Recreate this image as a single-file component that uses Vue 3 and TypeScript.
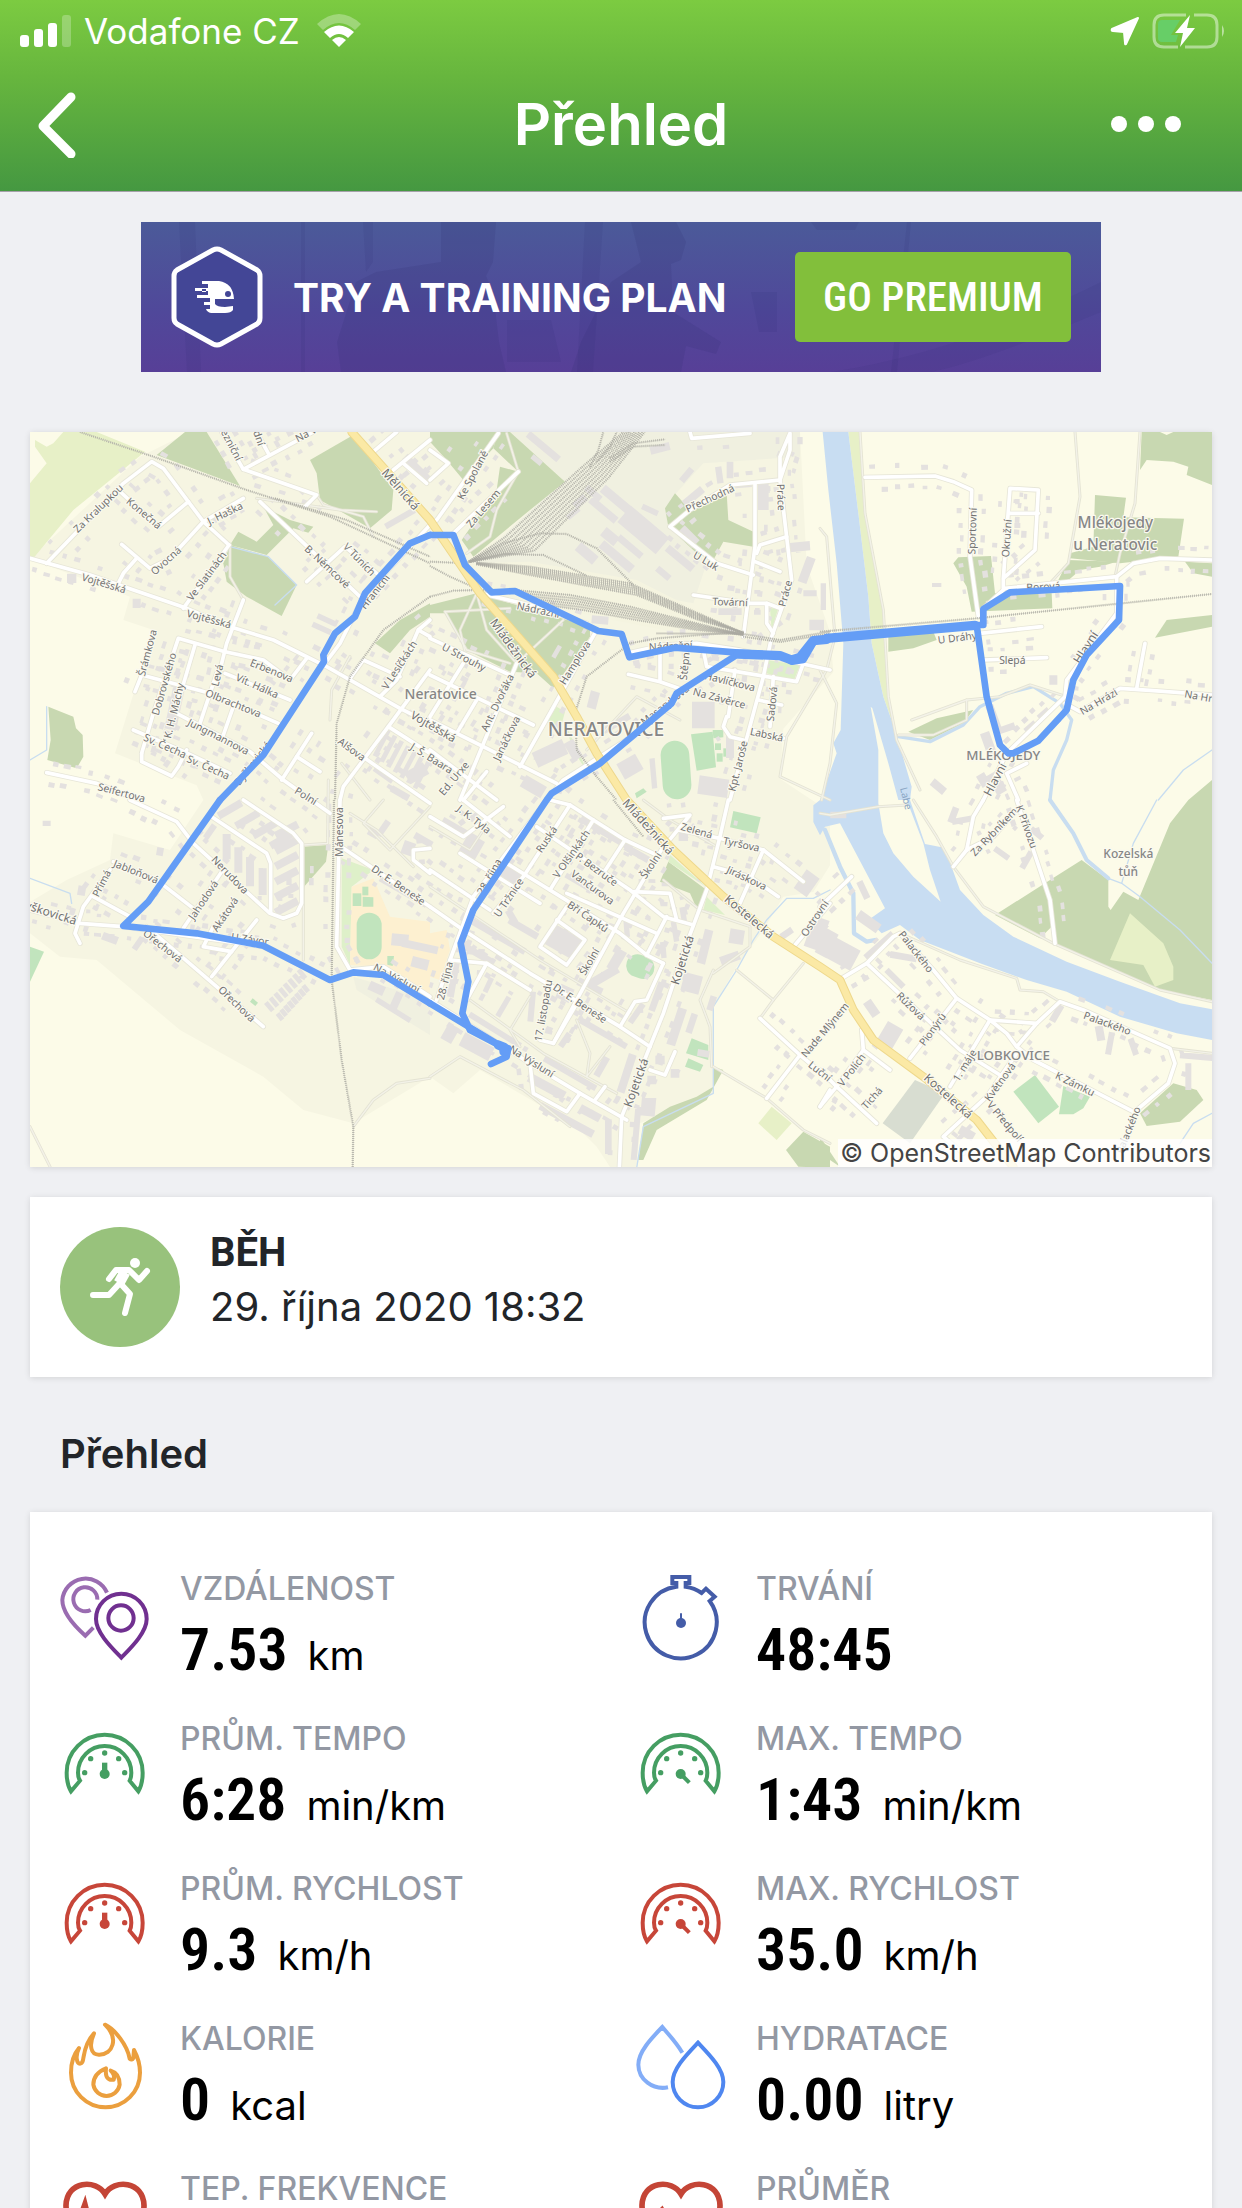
<script setup lang="ts">
type Tile = 'a' | 'b' | 'c' | 'd' | 'e' | 'f' | 'g'
type Shape = [Tile, string]

// The map is split in six sheets; every sheet keeps its own local coordinates.
const origin: Record<Tile, [number, number]> = {
  a: [0, -6], b: [1200, -6], c: [2370, -6],
  d: [0, 1104], e: [1200, 1104], f: [2370, 1104],
  g: [0, 0],
}

function place([tile, points]: Shape): string {
  const [ox, oy] = origin[tile]
  return points
    .split(' ')
    .map((pair) => {
      const [x, y] = pair.split(',').map(Number)
      return `${x + ox},${y + oy}`
    })
    .join(' ')
}

const areas: { cls: string; shapes: Shape[] }[] = [
  { cls: 'town', shapes: [['g', '0,380 330,74 480,0 2310,0 2330,400 2400,600 2410,720 2260,890 2250,1040 2400,1140 2400,1300 2350,1380 2260,1394 2200,1494 2120,1604 2050,1724 2050,1984 1830,2074 1820,2205 1740,2205 1700,2144 1640,2084 1350,1914 1270,1984 1200,1934 970,2074 820,2034 700,1934 450,1794 200,1584 90,1574 0,1504 0,1410 110,1344 240,1284 250,1204 420,1254 520,1104 500,1060 255,964 370,594 280,564 300,494']] },
  { cls: 'industry', shapes: [
    ['b', '240,6 1110,6 1110,80 820,100 720,210 720,290 830,400 790,520 130,400 400,150'],
    ['d', '970,530 1200,600 1200,705 980,570'],
  ] },
  { cls: 'yard', shapes: [['b', '110,400 300,395 620,450 900,590 940,620 700,600 500,560 200,500 100,460']] },
  { cls: 'meadow', shapes: [
    ['a', '0,160 50,100 15,50 15,30 50,50 70,40 100,6 200,6 345,65 130,240 10,385 0,385'],
    ['c', '85,6 120,6 135,250 190,540 205,800 225,900 190,800 155,640 145,500 115,250'],
    ['e', '1025,920 1085,970 1040,1020 985,970'],
  ] },
  { cls: 'forest', shapes: [
    ['a', '380,75 465,6 530,6 630,168'],
    ['a', '840,90 970,15 1090,180 1085,240 1020,295 960,260 870,210 860,130'],
    ['a', '700,230 780,270 850,290 835,308 790,295 710,375 600,345 625,305 680,335 730,285'],
    ['a', '600,345 715,380 800,465 755,558 650,500 590,455 580,400'],
    ['a', '55,830 130,860 138,895 158,915 160,980 140,1015 52,990 62,930'],
    ['a', '1035,640 1110,570 1200,520 1200,560 1140,600 1080,670'],
    ['b', '0,6 205,6 190,55 100,150 50,90 0,35'],
    ['b', '205,6 240,6 405,155 300,240 130,380 95,330 200,180 210,110 265,125 190,55'],
    ['b', '0,525 140,490 480,590 480,620 370,775 320,730 240,725 110,660 45,550 0,550'],
    ['b', '735,190 775,235 890,190 895,270 970,305 970,350 880,335 850,390 800,370 715,290 705,235'],
    ['c', '965,6 1020,6 1040,15 1060,6 1176,6 1176,165 1100,135 1105,110 1060,95 980,90 960,120'],
    ['c', '825,195 918,203 910,262 1092,266 1075,380 900,400 750,385 750,370 820,350'],
    ['c', '745,390 890,395 840,410 780,420 740,455 715,450'],
    ['c', '1095,395 1176,400 1176,440 1120,430'],
    ['c', '1040,570 1176,555 1176,590 1005,623'],
    ['c', '400,400 415,382 513,378 525,490 695,490 697,535 455,545 440,470'],
    ['c', '205,610 340,605 350,630 280,655 205,665'],
    ['c', '265,905 350,865 460,840 430,880 330,930'],
    ['f', '525,345 690,240 785,180 865,240 865,320 872,330 910,275 955,300 1050,70 1105,0 1176,-60 1176,600 1020,570 720,440 700,430 700,375 660,415'],
    ['f', '1060,850 1130,870 1150,900 1080,965 980,978 960,940'],
    ['f', '0,1010 60,1100 0,1060'],
    ['e', '1120,995 1200,1040 1200,1104 1105,1100 1068,1050'],
    ['e', '880,810 830,900 680,990 640,1080 625,1080 640,970 720,920 800,890 850,860 850,800'],
    ['e', '715,185 830,270 800,325 780,280 690,245'],
    ['d', '820,140 895,135 888,185 822,260'],
  ] },
  { cls: 'meadow', shapes: [['f', '930,340 1030,430 1060,500 1060,540 1005,560 970,495 870,480']] },
  { cls: 'garden', shapes: [
    ['d', '935,175 1030,210 965,260 960,495 935,440'],
    ['e', '830,290 885,345 820,330'],
    ['e', '720,165 830,262 715,185'],
    ['b', '1020,535 1045,535 1025,600'],
    ['b', '1010,690 1110,705 1090,755 1010,730'],
    ['b', '380,830 405,845 385,920 350,870'],
    ['b', '400,870 480,1040 430,960'],
  ] },
  { cls: 'school', shapes: [
    ['d', '965,260 1030,235 1080,350 1200,365 1200,590 1050,500 960,495'],
    ['e', '0,400 50,390 60,450 30,540 0,530'],
  ] },
  { cls: 'pitch', shapes: [
    ['d', '0,440 42,455 0,545'],
    ['d', '968,280 994,280 994,318 968,318'],
    ['d', '998,290 1030,292 1030,320 998,320'],
    ['d', '997,260 1015,260 1015,286 997,286'],
    ['d', '1072,468 1092,468 1088,498 1072,494'],
    ['d', '668,595 684,608 676,618 660,605'],
    ['b', '783,913 848,905 858,1012 800,1022'],
    ['b', '848,900 880,900 880,922 850,925'],
    ['b', '855,940 873,940 873,960 855,960'],
    ['b', '860,970 878,970 878,995 860,995'],
    ['b', '880,955 893,955 893,980 880,980'],
    ['b', '615,1090 640,1075 650,1085 620,1105'],
    ['e', '910,33 992,52 980,100 900,82'],
    ['e', '785,715 835,735 835,780 768,760'],
    ['e', '775,775 820,795 810,815 765,800'],
    ['f', '645,825 717,920 655,970 580,875'],
    ['f', '730,858 810,890 790,925 760,943 717,943'],
  ] },
  { cls: 'cemetery', shapes: [['f', '285,840 375,880 270,1030 188,970']] },
  { cls: 'water', shapes: [
    ['g', '2378,0 2395,174 2420,394 2440,634 2432,894 2410,934 2420,964 2370,1104 2350,1120 2350,1170 2370,1210 2385,1184 2430,1174 2565,1429 2515,1464 2555,1504 2610,1479 2670,1524 2850,1594 2990,1644 3110,1679 3270,1754 3440,1804 3546,1824 3546,1732 3450,1714 3270,1649 3110,1589 2950,1514 2860,1449 2790,1374 2750,1264 2735,1246 2685,1236 2640,1104 2645,1064 2595,894 2560,794 2525,634 2515,494 2485,244 2455,0'],
  ] },
  { cls: 'land', shapes: [
    ['g', '2522,824 2545,954 2545,1114 2560,1204 2590,1264 2650,1334 2732,1409 2700,1314 2680,1234 2630,1104 2605,1104 2575,994 2527,829'],
  ] },
]

const streams: { w: number; shape: Shape }[] = [
  { w: 13, shape: ['f', '15,90 60,200 100,280 102,400 140,425 165,420'] },
  { w: 10, shape: ['c', '235,920 330,935 430,885 480,830 560,790 640,770 720,820 755,870 740,930 700,1020 690,1110'] },
  { w: 12, shape: ['f', '690,0 760,100 800,180 865,235'] },
  { w: 4, shape: ['f', '865,235 905,250 960,290 1080,390 1176,490'] },
  { w: 4, shape: ['f', '905,250 940,130 1010,0'] },
  { w: 4, shape: ['c', '1015,1110 1090,1020 1176,960'] },
  { w: 4, shape: ['f', '1080,1030 1120,970 1176,940'] },
  { w: 4, shape: ['e', '1200,270 1150,295 1070,295 1010,360 970,420 920,510 850,620 850,880 640,980 620,1104'] },
  { w: 4, shape: ['a', '50,830 50,960 0,990'] },
  { w: 4, shape: ['d', '0,235 120,280 125,310'] },
  { w: 4, shape: ['a', '600,350 715,380 800,465 735,525'] },
]

const tracks: Shape[] = [
  ['c', '120,6 135,250 190,540 205,800 230,930 300,1080'],
  ['f', '280,0 350,110 400,200 490,320 700,430 1020,570 1176,605'],
  ['c', '765,6 780,200 745,400 690,460'],
  ['c', '960,6 945,220 900,370 885,440'],
  ['c', '0,720 50,820 30,1000 5,1110'],
  ['c', '0,295 20,320 45,620 20,720'],
  ['c', '235,915 340,915 440,870 440,810 275,870'],
  ['c', '440,810 540,800 630,765 740,800'],
  ['f', '0,40 30,45 175,20 260,15'],
  ['f', '240,400 420,480 590,535 600,570 670,575 720,605'],
  ['f', '1050,745 1176,760'],
  ['e', '920,510 1030,600 1120,490'],
  ['e', '1030,600 990,655'],
  ['e', '850,800 1010,895 1120,990 1200,1030'],
  ['e', '0,830 90,770 280,870 420,980'],
  ['d', '970,980 1030,900 1100,850 1200,835'],
  ['d', '0,980 60,1100'],
  ['a', '600,350 600,440 640,510'],
  ['a', '680,205 930,240 1040,245'],
  ['a', '860,195 880,225 1000,260 1030,320'],
  ['a', '900,870 905,780 960,680'],
  ['a', '935,1000 1020,1110'],
  ['b', '45,545 240,535'],
  ['b', '45,545 110,660 240,700'],
  ['b', '140,490 90,600 105,665'],
  ['b', '140,490 170,600 260,700 400,570'],
  ['b', '230,10 265,125 200,240 180,320 110,370'],
  ['b', '1190,720 1070,920 1050,1040 1200,1110'],
  ['b', '470,960 620,800 750,870'],
  ['d', '895,-60 893,130 820,135 820,480'],
  ['e', '0,260 330,480 600,640'],
  ['e', '120,600 340,760 560,880'],
  ['e', '440,660 480,760 470,830 540,740'],
  ['e', '300,590 240,690 270,740'],
  ['e', '200,30 120,150 0,80'],
  ['e', '850,510 810,600 840,680 845,800'],
  ['e', '640,0 720,60 860,140'],
  ['e', '700,240 810,330 960,380 960,440 850,520'],
  ['d', '960,40 1040,90 1150,200'],
  ['d', '1060,0 1000,70 1080,150 1200,20'],
]

const streets: Shape[] = [
  ['a', '0,385 180,435 470,535 600,590 730,630 890,710 1110,835 1200,880'],
  ['a', '50,400 280,160 365,95 400,115 520,275 597,345'],
  ['a', '640,205 520,275 420,385 360,415 275,343'],
  ['a', '320,385 280,430 265,460'],
  ['a', '597,345 460,535'],
  ['a', '265,180 385,290 475,215'],
  ['a', '575,6 640,118 860,195 825,230'],
  ['a', '640,118 850,6'],
  ['a', '680,6 715,70'],
  ['a', '640,510 590,640 560,760'],
  ['a', '335,970 370,850 445,625 585,665 700,690 780,750 830,685'],
  ['a', '495,645 440,830'],
  ['a', '315,785 335,735 540,790 745,880'],
  ['a', '560,730 510,880'],
  ['a', '610,830 580,915'],
  ['a', '585,730 780,810'],
  ['a', '310,900 450,960 600,1030'],
  ['a', '440,850 660,965 760,1050 900,1150'],
  ['a', '335,970 335,995 425,1038 445,1010 470,960'],
  ['a', '50,1028 200,1060 300,1100'],
  ['a', '690,215 990,500'],
  ['a', '830,455 945,350 1040,430'],
  ['a', '1110,740 1000,690 960,745'],
  ['a', '1200,570 1165,600 1100,750 1050,800'],
  ['a', '1165,600 1200,620'],
  ['a', '1200,720 1075,890 940,1070 930,1110'],
  ['a', '755,1050 845,910'],
  ['a', '800,980 870,1025'],
  ['a', '1075,890 1200,970'],
  ['a', '1005,985 1200,1120'],
  ['a', '1200,285 1000,500 930,640 870,720'],
  ['a', '1030,65 1100,6'],
  ['a', '1090,120 1200,30'],
  ['a', '1120,100 1190,160'],
  ['b', '0,280 20,270 205,10'],
  ['b', '70,310 265,125'],
  ['b', '0,150 55,100 0,60'],
  ['b', '720,290 860,400 970,435'],
  ['b', '720,290 780,240 900,165 1050,150'],
  ['b', '975,160 975,350 940,620'],
  ['b', '1050,150 1050,80 1080,10 1080,60 1050,150 1085,450 1025,620 1000,740 900,1110'],
  ['b', '1070,320 990,345 980,370'],
  ['b', '975,395 1050,425'],
  ['b', '790,495 960,520 1010,520 1050,535'],
  ['b', '1010,520 1010,580 1030,610'],
  ['b', '590,670 700,645 800,640 930,660 1200,720'],
  ['b', '150,490 300,525 470,580'],
  ['b', '500,600 270,1010'],
  ['b', '0,625 240,735'],
  ['b', '0,735 310,885'],
  ['b', '260,700 90,1110'],
  ['b', '100,700 0,860'],
  ['b', '140,810 80,910'],
  ['b', '0,870 380,1060'],
  ['b', '350,1110 400,1050 620,910 740,790 920,675'],
  ['b', '690,650 690,750'],
  ['b', '595,733 690,755 760,780'],
  ['b', '820,660 830,710 1100,755 1120,700'],
  ['b', '890,860 880,890 900,920 940,930'],
  ['b', '915,720 895,860'],
  ['b', '1030,740 1020,890'],
  ['b', '965,900 1060,925'],
  ['b', '985,810 1055,825'],
  ['b', '0,960 160,1080 200,1110'],
  ['b', '170,1025 100,1110'],
  ['b', '780,6 785,25 960,10'],
  ['c', '135,142 345,138 400,155 455,180 450,380 475,560'],
  ['c', '550,475 550,445 570,175 655,180 645,360 550,445'],
  ['c', '570,250 655,250'],
  ['c', '485,540 555,475 890,440 940,400 1020,385 1176,390'],
  ['c', '890,440 890,550 740,750 735,800 560,970 490,1110'],
  ['c', '480,610 665,590'],
  ['c', '490,690 680,683'],
  ['c', '735,820 780,845 900,775 1000,782 1176,795'],
  ['c', '950,775 975,640'],
  ['c', '595,1110 560,1030 620,1000'],
  ['f', '490,0 460,50 440,150 400,200'],
  ['f', '440,150 520,110 590,30'],
  ['f', '590,0 690,300 705,430'],
  ['f', '65,535 140,490 220,410 240,400 340,510 410,595 510,660 560,700 590,740 640,780 940,935'],
  ['f', '0,320 95,230'],
  ['f', '140,490 420,750 540,825'],
  ['f', '510,660 650,670'],
  ['f', '590,740 650,670 720,605 790,630 1050,745 1065,790 1045,850 950,930'],
  ['f', '410,595 270,775'],
  ['f', '510,660 390,860'],
  ['f', '590,760 500,890 370,1010 430,1060'],
  ['f', '125,690 130,750 210,810'],
  ['f', '130,750 50,860 0,920'],
  ['f', '0,810 50,860 170,970'],
  ['e', '420,15 280,230 190,340'],
  ['e', '490,60 360,270'],
  ['e', '360,0 420,15 490,60 585,120 690,170'],
  ['e', '585,120 520,220'],
  ['e', '700,140 580,340 370,730 330,720'],
  ['e', '895,0 870,110 830,270 770,430 700,640 575,950 568,1104'],
  ['e', '320,80 600,270 700,350 790,375'],
  ['e', '230,190 570,400 650,465 700,490'],
  ['e', '410,280 680,400'],
  ['e', '0,320 100,390 300,520 570,680 660,740'],
  ['e', '0,210 180,330'],
  ['e', '0,50 100,110 220,20'],
  ['e', '90,160 330,310'],
  ['e', '100,0 240,110'],
  ['e', '410,320 330,440 410,495 465,420 380,360'],
  ['e', '650,465 710,350'],
  ['e', '610,275 720,280 740,360'],
  ['e', '700,490 650,600 615,605 570,680'],
  ['e', '60,480 170,490 300,570'],
  ['e', '170,490 110,600'],
  ['e', '350,0 130,290 60,480 20,600'],
  ['e', '0,600 300,790 450,880 590,960'],
  ['e', '300,790 310,880 410,935 450,880'],
  ['e', '495,900 525,860'],
  ['e', '660,810 705,825 735,755'],
  ['e', '435,620 370,730'],
  ['e', '700,55 780,45 710,130'],
  ['e', '745,90 870,115 1000,150 1120,245'],
  ['e', '1000,150 930,310'],
  ['e', '850,200 960,230 1045,290'],
  ['e', '1095,435 1200,310'],
  ['e', '990,655 1110,765 1010,895'],
  ['e', '1110,765 1200,840'],
  ['e', '1200,870 1170,920'],
  ['d', '150,430 135,400 160,320 240,210'],
  ['d', '0,330 150,370 280,380 700,440 900,540'],
  ['d', '190,290 300,350'],
  ['d', '250,185 380,240 490,325'],
  ['d', '460,385 575,215'],
  ['d', '350,380 700,680'],
  ['d', '545,530 680,360'],
  ['d', '550,380 520,440 605,455'],
  ['d', '300,0 440,65 490,130 720,340 760,355 800,340 815,310 815,130 790,100 640,0'],
  ['d', '545,50 710,160 722,190 722,335'],
  ['d', '930,0 920,440 960,510 1060,500 1200,590'],
  ['d', '940,145 1200,320'],
  ['d', '1200,220 1150,180 1150,150 1200,145'],
]

const highway =
  '965,0 1200,264 1350,484 1570,734 1640,854 1700,964 1790,1104 1930,1254 2080,1394 2230,1514 2370,1604 2430,1644 2470,1734 2530,1824 2680,1934 2840,2064 2950,2205'

const rails: Shape[] = [
  ['a', '150,6 370,80 650,180 900,260 1200,400'],
  ['a', '735,205 950,270 1200,380'],
  ['b', '0,395 110,400 220,340 330,310 410,312 500,355 610,465'],
  ['b', '0,408 60,440 150,480'],
  ['b', '120,395 220,372 340,375 470,437'],
  ['b', '0,500 70,482 150,480 260,485'],
  ['a', '1200,500 1060,600 960,740 920,880 915,1110'],
  ['d', '912,0 905,540 935,780 970,980 968,1104'],
  ['b', '940,605 680,625 600,640 470,740 435,850 440,960 500,1040 560,1110'],
  ['b', '680,610 940,612 1050,630 1200,605'],
  ['b', '940,620 1050,636 1200,611'],
  ['c', '0,605 470,565 740,537 1176,492'],
  ['b', '480,110 505,60 520,6'],
  ['b', '500,95 540,50 560,6'],
  ['b', '540,95 610,50 705,45'],
  ['b', '540,85 610,40 705,28'],
  ['e', '550,0 640,110'],
]
for (let i = 0; i < 9; i++) {
  rails.push(['b', `${116 + i},395 ${225 + i * 11},${322 + i * 5} ${455 + i * 10},${112 + i * 4} ${580 + i * 8},6`])
}
for (let i = 0; i < 6; i++) {
  rails.push(['b', `140,${398 + i} 300,${410 + i * 5} ${600 + i * 4},${460 + i * 7} 800,${548 + i * 4} 940,609`])
  rails.push(['b', `${250 + i * 20},${480 + i * 9} ${420 + i * 8},${495 + i * 9} ${600 + i * 4},${530 + i * 8} 800,${580 + i * 4} 940,614`])
}

const routes: Shape[] = [
  ['a', '1200,315 1140,340 1005,490 975,560 915,610 880,675 882,695 700,975 570,1110'],
  ['d', '570,0 355,305 280,378 500,400 700,437 900,540 970,517 1060,525 1200,610'],
  ['e', '0,610 215,740 235,745 230,770 183,792'],
  ['b', '0,315 70,315 105,405 185,487 255,483 505,603 575,612 598,682 735,653 925,668 1050,675 1085,695 1120,690 1155,630 1200,625'],
  ['b', '920,675 740,790 725,820 510,1000 365,1090 350,1110 130,1440 92,1540 115,1655 97,1750 120,1800 215,1850'],
  ['c', '-20,630 470,585 490,585 490,537 570,487 900,468 897,570 800,675 760,750 740,840 655,932 580,970 565,970 540,945 500,800 470,585'],
]
const doubled: Shape[] = [
  ['b', '925,672 1050,677 1085,690 1110,682 1150,632 1190,628'],
  ['c', '20,625 465,586'],
  ['e', '205,735 222,742 222,755'],
]

// Small houses are lined up on both sides of every street.
let seed = 7
function rnd(): number {
  seed = (seed * 16807) % 2147483647
  return seed / 2147483647
}
function house(x: number, y: number, ux: number, uy: number, l: number, w: number): string {
  const ax = ux * l, ay = uy * l, bx = -uy * w, by = ux * w
  const p = [[-ax - bx, -ay - by], [ax - bx, ay - by], [ax + bx, ay + by], [-ax + bx, -ay + by]]
  return 'M' + p.map(([dx, dy]) => `${(x + dx).toFixed(0)} ${(y + dy).toFixed(0)}`).join('L') + 'Z'
}
let houses = ''
for (const street of streets) {
  const pts = place(street).split(' ').map((s) => s.split(',').map(Number))
  for (let i = 1; i < pts.length; i++) {
    const dx = pts[i][0] - pts[i - 1][0]
    const dy = pts[i][1] - pts[i - 1][1]
    const len = Math.hypot(dx, dy)
    const ux = dx / len, uy = dy / len
    for (let t = 22; t < len - 12; t += 32 + rnd() * 14) {
      for (const side of [-1, 1]) {
        if (rnd() < 0.28) continue
        const off = side * (26 + rnd() * 12)
        houses += house(pts[i - 1][0] + ux * t - uy * off, pts[i - 1][1] + uy * t + ux * off, ux, uy, 6 + rnd() * 5, 5 + rnd() * 3)
      }
    }
  }
}

// Blocks of flats, halls and garages: sheet, centre, half length, half width, angle.
const blocks: [Tile, number, number, number, number, number][] = [
  ['b', 640, 300, 75, 32, 40], ['b', 560, 210, 55, 14, 40], ['b', 520, 240, 50, 12, 40], ['b', 490, 190, 28, 10, 40],
  ['b', 560, 380, 60, 14, 40], ['b', 600, 350, 45, 10, 40], ['b', 470, 370, 34, 16, 40], ['b', 540, 320, 26, 16, 40],
  ['b', 450, 215, 22, 12, -40], ['b', 430, 250, 22, 8, -40], ['b', 750, 385, 50, 12, 40], ['b', 700, 430, 24, 10, 40],
  ['b', 660, 240, 26, 9, 25], ['b', 770, 135, 24, 10, -50], ['b', 690, 55, 30, 12, -15], ['b', 790, 200, 36, 12, -40],
  ['b', 340, 50, 60, 11, 40], ['b', 320, 90, 18, 8, 40], ['b', 775, 320, 32, 16, 45], ['b', 900, 120, 10, 25, 0],
  ['b', 868, 135, 10, 25, -8], ['b', 1000, 200, 16, 40, 0], ['b', 940, 165, 25, 8, -5], ['b', 1110, 350, 30, 14, -5],
  ['b', 1130, 420, 14, 40, 20], ['b', 1160, 585, 22, 16, 0], ['b', 900, 545, 35, 10, 0], ['b', 820, 855, 34, 40, 0],
  ['b', 360, 970, 50, 24, -25], ['b', 430, 960, 30, 16, 60], ['b', 600, 1010, 32, 26, -30], ['b', 670, 1030, 8, 45, -5],
  ['b', 850, 1070, 45, 28, 8], ['b', 560, 880, 45, 10, -30], ['b', 310, 1070, 36, 20, 30], ['b', 490, 810, 14, 26, 15],
  ['b', 510, 570, 25, 12, 5], ['b', 380, 665, 7, 20, 30], ['b', 900, 950, 12, 34, 0], ['b', 1140, 490, 20, 9, 0],
  ['a', 1110, 265, 50, 9, -30], ['a', 1160, 115, 50, 12, 45], ['a', 890, 570, 30, 8, 25], ['a', 875, 595, 30, 8, 25],
  ['a', 320, 520, 12, 14, 0], ['a', 125, 445, 14, 14, 0], ['a', 1060, 1035, 34, 8, 35], ['a', 1160, 1030, 32, 20, -30],
  ['a', 1110, 1090, 30, 10, 30], ['a', 435, 830, 18, 70, 12],
  ['d', 1060, 85, 10, 26, 35], ['d', 1030, 100, 16, 12, 30], ['d', 1135, 145, 18, 20, 20], ['d', 1120, 275, 80, 9, 30],
  ['d', 1180, 120, 30, 10, 30], ['d', 1110, 420, 26, 18, 5], ['d', 1170, 440, 55, 12, 12], ['d', 1170, 490, 26, 16, 15],
  ['d', 1040, 565, 24, 14, 25], ['d', 1100, 600, 12, 24, 25], ['d', 1090, 630, 60, 8, 32], ['d', 325, 430, 9, 22, 35],
  ['d', 240, 415, 24, 12, 20], ['d', 390, 155, 10, 12, 10], ['d', 155, 272, 12, 14, 10], ['d', 50, 70, 12, 8, 0],
  ['d', 590, 140, 12, 38, 0], ['d', 625, 180, 12, 38, 0], ['d', 660, 215, 12, 44, 0], ['d', 698, 245, 12, 40, 0],
  ['d', 540, 95, 9, 24, 35],
  ['e', 125, 140, 28, 32, 30], ['e', 90, 90, 60, 10, 30], ['e', 250, 225, 34, 22, 35], ['e', 190, 400, 110, 10, 30],
  ['e', 140, 460, 60, 10, 30], ['e', 245, 350, 22, 10, 60], ['e', 280, 385, 50, 10, 30], ['e', 400, 425, 46, 34, 30],
  ['e', 530, 100, 90, 11, 30], ['e', 620, 160, 40, 10, 30], ['e', 450, 250, 50, 8, 30], ['e', 560, 480, 16, 34, 30],
  ['e', 520, 530, 50, 14, -30], ['e', 480, 560, 40, 12, 25], ['e', 590, 385, 8, 26, -5], ['e', 735, 395, 8, 30, -10],
  ['e', 760, 345, 8, 24, -10], ['e', 700, 450, 8, 24, -5], ['e', 825, 440, 13, 52, 14], ['e', 920, 410, 22, 22, 10],
  ['e', 900, 475, 30, 14, -20], ['e', 785, 550, 28, 28, 15], ['e', 680, 590, 10, 45, 20], ['e', 740, 680, 14, 58, 18],
  ['e', 785, 670, 10, 30, 18], ['e', 845, 610, 10, 22, 18], ['e', 620, 640, 9, 34, 35], ['e', 590, 820, 12, 60, 18],
  ['e', 520, 700, 80, 9, 30], ['e', 420, 820, 90, 9, 30], ['e', 220, 620, 8, 34, 30], ['e', 175, 555, 8, 24, 25],
  ['e', 195, 690, 90, 9, 32], ['e', 305, 620, 9, 45, 5], ['e', 140, 740, 50, 22, 28], ['e', 60, 700, 18, 26, 30],
  ['e', 350, 860, 60, 14, 28], ['e', 410, 960, 90, 12, 28], ['e', 480, 940, 34, 12, 28], ['e', 535, 1010, 10, 52, 0],
  ['e', 618, 1000, 9, 80, 5], ['e', 655, 920, 22, 28, 5], ['e', 515, 800, 10, 32, 30], ['e', 405, 720, 9, 24, 35],
  ['e', 70, 540, 10, 52, 10], ['e', 1160, 400, 24, 48, 20], ['e', 1130, 250, 24, 34, 35], ['e', 690, 780, 14, 13, 0],
  ['e', 735, 820, 13, 13, 0], ['e', 665, 840, 13, 13, 0], ['e', 760, 110, 14, 13, 0], ['e', 1070, 400, 20, 10, -35],
  ['e', 820, 760, 18, 10, 10], ['e', 405, 580, 22, 22, 25],
  ['f', 65, 460, 46, 34, 28], ['f', 20, 430, 20, 40, 28], ['f', 145, 365, 38, 16, 35], ['f', 180, 440, 55, 14, -42],
  ['f', 55, 45, 24, 10, 0], ['f', 130, 270, 10, 28, -25], ['f', 155, 625, 14, 26, -35], ['f', 210, 705, 26, 34, 30],
  ['f', 250, 470, 40, 10, 10], ['f', 225, 535, 36, 9, 45], ['f', 430, 60, 34, 9, -10], ['f', 400, 45, 10, 24, 20],
  ['f', 620, 180, 9, 28, 30], ['f', 545, 160, 26, 9, 35], ['f', 650, 100, 22, 9, 40], ['f', 840, 700, 12, 22, -10],
  ['f', 870, 730, 9, 34, 10], ['f', 710, 640, 10, 28, 30], ['f', 1105, 830, 9, 40, 0], ['f', 1130, 770, 50, 9, 5],
  ['f', 940, 740, 9, 26, -20], ['f', 440, 1000, 24, 14, 30],
  ['c', 520, 860, 12, 36, -20], ['c', 560, 895, 26, 10, -20], ['c', 700, 750, 12, 14, 0], ['c', 505, 940, 14, 34, -20],
  ['c', 670, 850, 20, 8, -40], ['c', 630, 890, 20, 8, -40], ['c', 530, 1060, 16, 34, -30], ['c', 490, 1050, 14, 20, -30],
  ['c', 355, 1070, 24, 12, 40], ['c', 350, 465, 14, 6, 0], ['c', 10, 500, 8, 40, 0],
]
for (let i = 0; i < 6; i++) blocks.push(['d', 770, 90 + i * 46, 38, 12, -28])
for (let i = 0; i < 4; i++) blocks.push(['d', 600 + i * 52, 28 + i * 30, 40, 11, -30])
for (let i = 0; i < 7; i++) blocks.push(['a', 1055 + i * 20, 940 + i * 16, 7, 44, 28])
for (let i = 0; i < 8; i++) {
  blocks.push(['d', 718 + i * 14, 620 - i * 14, 7, 16, -40])
  blocks.push(['d', 750 + i * 11, 650 - i * 12, 7, 12, -40])
}
let big = ''
for (const [tile, x, y, l, w, deg] of blocks) {
  const r = (deg * Math.PI) / 180
  big += house(x + origin[tile][0], y + origin[tile][1], Math.cos(r), Math.sin(r), l, w)
}

const labels: [Tile, string, number, number, number, number?][] = [
  ['a', 'Za Kralupkou', 205, 235, -44], ['a', 'Konečná', 342, 250, 40], ['a', 'J. Haška', 585, 250, -26],
  ['a', 'Ovocná', 408, 392, -42], ['a', 'Ve Slatinách', 530, 438, -53], ['a', 'Vojtěšská', 222, 460, 17],
  ['a', 'Vojtěšská', 537, 567, 15], ['a', 'ezniční', 605, 45, 62], ['a', 'dní', 687, 24, 70], ['a', 'Na V', 828, 12, -28],
  ['a', 'Mělnická', 1112, 178, 49, 36], ['a', 'V Túních', 988, 388, 46], ['a', 'B. Němcové', 892, 410, 43],
  ['a', 'Hraniční', 1035, 485, -52], ['a', 'Šrámkova', 352, 668, -75], ['a', 'Dobrovského', 402, 762, -74],
  ['a', 'Levá', 562, 736, -76], ['a', 'Erbenova', 725, 722, 22], ['a', 'Vít. Hálka', 682, 768, 24],
  ['a', 'Olbrachtova', 610, 820, 22], ['a', 'K. H. Máchy', 432, 842, -76], ['a', 'Jungmannova', 565, 920, 27],
  ['a', 'Sv. Čecha', 405, 948, 24], ['a', 'Sv. Čecha', 535, 1012, 24], ['a', 'V Lesíčkách', 1108, 705, -57],
  ['a', 'Alšova', 965, 958, 36], ['a', 'Seifertova', 275, 1088, 15], ['a', 'Polní', 828, 1098, 32],
  ['a', 'Byškovická', 668, 1000, -52],
  ['b', 'Ke Spolaně', 128, 135, -62], ['b', 'Za Lesem', 160, 235, -50], ['b', 'Přechodná', 840, 205, -25],
  ['b', 'Práce', 1053, 202, 88], ['b', 'Práce', 1066, 490, -75], ['b', 'U Luk', 828, 393, 30], ['b', 'Tovární', 900, 516, 2],
  ['b', 'Nádražní', 325, 540, 12], ['b', 'Mládežnická', 250, 655, 54, 36], ['b', 'U Strouhy', 102, 682, 28],
  ['b', 'Hamplova', 435, 698, -58], ['b', 'Nádražní', 722, 648, -3], ['b', 'Štěpná', 765, 700, -84],
  ['b', 'Havlíčkova', 900, 755, 14], ['b', 'Na Závěrce', 868, 805, 15], ['b', 'Sadová', 1026, 822, -84],
  ['b', 'Labská', 1010, 914, 12], ['b', 'Kpt. Jaroše', 924, 1008, -76], ['b', 'Ant. Dvořáka', 202, 818, -64],
  ['b', 'Janáčkova', 230, 925, -64], ['b', 'Vojtěšská', 10, 890, 30, 34], ['b', 'J. Š. Baara', 5, 985, 32],
  ['b', 'Ed. Urxe', 72, 1045, -50], ['b', 'Masarykova', 705, 825, -38],
  ['c', 'Sportovní', 457, 303, -88], ['c', 'Okružní', 560, 325, -86], ['c', 'Borová', 670, 470, -3],
  ['c', 'U Dráhy', 412, 623, -7], ['c', 'Slepá', 577, 690, 0], ['c', 'Hlavní', 797, 652, -58, 36],
  ['c', 'Na Hrázi', 836, 815, -30], ['c', 'Na Hrázi', 1155, 802, 10], ['c', 'Hlavní', 525, 1048, -62, 36],
  ['d', 'Jabloňová', 318, 215, 22], ['d', 'Přímá', 215, 250, -63], ['d', 'Byškovická', 52, 335, 18, 36],
  ['d', 'Nerudova', 600, 225, 46], ['d', 'Jahodová', 520, 300, -56], ['d', 'Akátová', 585, 343, -56],
  ['d', 'Ořechová', 398, 438, 38], ['d', 'Ořechová', 620, 612, 44], ['d', 'U Závor', 660, 418, 8],
  ['d', 'Mánesova', 928, 96, -90], ['d', 'Dr. E. Beneše', 1105, 255, 34], ['d', 'Na Výsluní', 1100, 535, 28],
  ['e', 'J. K. Tyla', 132, 58, 38], ['e', 'Ruská', 350, 118, -56], ['e', 'V Olšinkách', 424, 162, -55],
  ['e', 'P. Bezruče', 500, 208, 36], ['e', 'Vančurova', 488, 262, 36], ['e', 'Školní', 663, 196, -56],
  ['e', 'Bří Čapků', 474, 350, 34], ['e', 'U Tržnice', 236, 293, -56], ['e', '28. října', 178, 230, -60],
  ['e', '28. října', 45, 542, -76], ['e', 'Mládežnická', 655, 80, 48, 36], ['e', 'Zelená', 800, 92, 16],
  ['e', 'Tyršova', 934, 133, 12], ['e', 'Jiráskova', 950, 234, 25], ['e', 'Kostelecká', 958, 350, 40, 36],
  ['e', 'Ostrovní', 1154, 355, -56], ['e', 'Školní', 478, 485, -60], ['e', 'Kojetická', 757, 480, -72, 36],
  ['e', 'Kojetická', 618, 848, -70, 36], ['e', 'Dr. E. Beneše', 450, 610, 34], ['e', '17. listopadu', 340, 632, -80],
  ['e', 'Na Výsluní', 305, 784, 32], ['e', 'Nade Mlýnem', 1185, 690, -50], ['e', 'Luční', 1170, 814, 38],
  ['f', 'Za Rybníkem', 522, 95, -46], ['f', 'K Přívozu', 620, 80, 70], ['f', 'Palackého', 288, 455, 52],
  ['f', 'Palackého', 862, 670, 20], ['f', 'Růžová', 272, 618, 44], ['f', 'Pionýrů', 338, 688, -54],
  ['f', 'V Polích', 95, 810, -52], ['f', 'Tichá', 156, 894, -48], ['f', '1. máje', 434, 796, -58],
  ['f', 'Kostelecká', 385, 888, 42, 36], ['f', 'Květnová', 540, 846, -54], ['f', 'V Předpolí', 555, 965, 50],
  ['f', 'K Zámku', 765, 852, 26], ['f', 'Palackého', 925, 990, -68],
]

const places: [Tile, string, number, number, number, number][] = [
  ['a', 'Neratovice', 1232, 792, 42, 500], ['b', 'NERATOVICE', 528, 896, 58, 500],
  ['c', 'Mlékojedy', 886, 278, 46, 500], ['c', 'u Neratovic', 886, 342, 46, 500],
  ['c', 'MLÉKOJEDY', 550, 976, 40, 500], ['f', 'LOBKOVICE', 580, 766, 40, 500],
  ['f', 'Kozelská', 925, 162, 36, 500], ['f', 'tůň', 925, 214, 36, 500],
]

interface Stat { icon: string; label: string; value?: string; unit?: string }
const stats: Stat[] = [
  { icon: 'pins', label: 'VZDÁLENOST', value: '7.53', unit: 'km' },
  { icon: 'watch', label: 'TRVÁNÍ', value: '48:45' },
  { icon: 'gauge green avg', label: 'PRŮM. TEMPO', value: '6:28', unit: 'min/km' },
  { icon: 'gauge green max', label: 'MAX. TEMPO', value: '1:43', unit: 'min/km' },
  { icon: 'gauge red avg', label: 'PRŮM. RYCHLOST', value: '9.3', unit: 'km/h' },
  { icon: 'gauge red max', label: 'MAX. RYCHLOST', value: '35.0', unit: 'km/h' },
  { icon: 'flame', label: 'KALORIE', value: '0', unit: 'kcal' },
  { icon: 'drops', label: 'HYDRATACE', value: '0.00', unit: 'litry' },
  { icon: 'heart', label: 'TEP. FREKVENCE' },
  { icon: 'heart low', label: 'PRŮMĚR' },
]
</script>

<template>
  <div class="app">
    <header class="top">
      <div class="status">
        <svg class="signal" width="52" height="32" viewBox="0 0 52 32" fill="#fff">
          <rect x="0" y="20" width="9" height="12" rx="3" />
          <rect x="14" y="14" width="9" height="18" rx="3" />
          <rect x="28" y="8" width="9" height="24" rx="3" />
          <rect x="42" y="0" width="9" height="32" rx="3" opacity=".25" />
        </svg>
        <span class="carrier">Vodafone CZ</span>
        <svg width="46" height="34" viewBox="0 0 46 34" fill="#fff">
          <path opacity=".3" d="M1 10Q23 -10 45 10L39 16Q23 2 7 16Z" />
          <path d="M8 18Q23 5 38 18L32 24Q23 16 14 24Z" />
          <path d="M16 26Q23 20 30 26L23 33Z" />
        </svg>
        <span class="grow"></span>
        <svg width="30" height="30" viewBox="0 0 30 30" fill="#fff"><path d="M28 2L16 28Q15 29 15 27L14 16L3 15Q1 15 2 13Z" stroke="#fff" stroke-width="2" stroke-linejoin="round" /></svg>
        <svg class="battery" width="75" height="36" viewBox="0 0 75 36" fill="none">
          <path d="M34 2H12Q2 2 2 12V24Q2 34 12 34H26M42 2H55Q65 2 65 12V24Q65 34 55 34H33" stroke="#fff" stroke-opacity=".45" stroke-width="3" />
          <path d="M70 12Q74 18 70 24Z" fill="#fff" fill-opacity=".5" />
          <path d="M10 7H28L19 22H26L24 29H10Q6 29 6 25V11Q6 7 10 7Z" fill="#67ce67" />
          <path d="M38 2L23 20H31L28 34L43 15H35Z" fill="#fff" />
        </svg>
      </div>
      <nav class="nav">
        <button class="icon-btn" aria-label="Zpět">
          <svg width="40" height="68" viewBox="0 0 40 68" fill="none" stroke="#fff" stroke-width="9" stroke-linecap="round" stroke-linejoin="round"><path d="M34 7L6 36L34 64" /></svg>
        </button>
        <h1>Přehled</h1>
        <button class="icon-btn more" aria-label="Více">
          <svg width="72" height="18" viewBox="0 0 72 18" fill="#fff"><circle cx="9" cy="9" r="8" /><circle cx="36" cy="9" r="8" /><circle cx="63" cy="9" r="8" /></svg>
        </button>
      </nav>
    </header>

    <main>
      <section class="banner">
        <svg class="photo" viewBox="0 0 960 150" preserveAspectRatio="xMidYMid slice" fill="#2c2c6c">
          <path opacity=".1" d="M38 0H54L60 150H46ZM160 0H164V150H160ZM444 0H462L452 150H436ZM766 0H770L756 150H750Z" />
          <path opacity=".14" d="M300 0H355L352 40L345 54L352 70L358 120L365 150H200L196 120L215 60L235 50L300 40Z" />
          <path opacity=".14" d="M490 0H535L545 20L540 38L530 42L532 90L580 120L575 132L545 124L540 150H430L440 120L470 60L500 40Z" />
          <path opacity=".1" d="M222 0H232V40L225 50ZM366 98H410L420 140H366ZM610 70H636V110H618ZM670 0H718L714 8H676Z" />
          <path opacity=".08" d="M690 150Q820 130 960 60V90Q840 140 790 150Z" />
        </svg>
        <svg class="badge" width="92" height="102" viewBox="0 0 92 102">
          <path d="M42 4Q46 2 50 4L86 24Q89 26 89 30V72Q89 76 86 78L50 98Q46 100 42 98L6 78Q3 76 3 72V30Q3 26 6 24Z" fill="#434696" stroke="#fff" stroke-width="5" />
          <path fill="#fff" d="M31 35H48Q62 37 63 53H44V58Q46 61 54 61L62 60V64Q60 67 54 67H40Q36 66 35 63H39V59H33V56H39V52H26V49H37V45H24V42H37V38H31ZM31 43V46H35V43Z" />
          <ellipse cx="57" cy="48" rx="3" ry="3" fill="#434696" />
        </svg>
        <strong>TRY A TRAINING PLAN</strong>
        <button class="premium">GO PREMIUM</button>
      </section>

      <section class="map">
        <svg viewBox="0 0 3546 2205">
          <rect width="3546" height="2205" fill="#fcfbe8" />
          <g v-for="(layer, i) in areas" :key="'a' + i" :class="layer.cls">
            <polygon v-for="(s, j) in layer.shapes" :key="j" :points="place(s)" />
          </g>
          <g class="pitch">
            <rect x="980" y="1442" width="75" height="140" rx="37" />
            <rect x="1895" y="926" width="86" height="176" rx="43" transform="rotate(-4 1938 1014)" />
            <rect x="1788" y="1570" width="86" height="68" rx="34" transform="rotate(20 1831 1604)" />
          </g>
          <g fill="none" stroke="#c8ddf0" stroke-linecap="round" stroke-linejoin="round">
            <polyline v-for="(s, i) in streams" :key="i" :points="place(s.shape)" :stroke-width="s.w" />
          </g>
          <path :d="houses + big" fill="#e4e1df" />
          <g class="line" stroke="#e4e3d3" stroke-width="9"><polyline v-for="(s, i) in tracks" :key="i" :points="place(s)" /></g>
          <g class="line" stroke="#f3f2e8" stroke-width="4"><polyline v-for="(s, i) in tracks" :key="i" :points="place(s)" /></g>
          <g class="line" stroke="#e7e6d8" stroke-width="16"><polyline v-for="(s, i) in streets" :key="i" :points="place(s)" /></g>
          <g class="line" stroke="#fff" stroke-width="11"><polyline v-for="(s, i) in streets" :key="i" :points="place(s)" /></g>
          <g class="line" stroke="#cfcec3" stroke-width="2"><polyline v-for="(s, i) in rails" :key="i" :points="place(s)" /></g>
          <g fill="none" stroke="#a9a8a0" stroke-width="7" stroke-dasharray="2 4"><polyline v-for="(s, i) in rails" :key="i" :points="place(s)" /></g>
          <polyline class="line" :points="highway" stroke="#eed88c" stroke-width="26" />
          <polyline class="line" :points="highway" stroke="#fbe9a5" stroke-width="20" />
          <g class="names">
            <text
              v-for="([t, name, x, y, deg, size], i) in labels"
              :key="i"
              :font-size="size ?? 31"
              dy=".35em"
              :transform="`translate(${x + origin[t][0]} ${y + origin[t][1]}) rotate(${deg})`"
            >{{ name }}</text>
            <text x="2618" y="1102" font-size="30" class="river" transform="rotate(76 2618 1102)">Labe</text>
          </g>
          <g class="names places">
            <text
              v-for="([t, name, x, y, size, weight], i) in places"
              :key="i"
              :x="x + origin[t][0]"
              :y="y + origin[t][1]"
              dy=".36em"
              :font-size="size"
              :font-weight="weight"
            >{{ name }}</text>
          </g>
          <g class="line" stroke="#649df6" stroke-width="20"><polyline v-for="(s, i) in routes" :key="i" :points="place(s)" /></g>
          <g class="line" stroke="#649df6" stroke-width="28"><polyline v-for="(s, i) in doubled" :key="i" :points="place(s)" /></g>
        </svg>
        <small>© OpenStreetMap Contributors</small>
      </section>

      <section class="card activity">
        <svg width="120" height="120" viewBox="0 0 120 120">
          <circle cx="60" cy="60" r="60" fill="#98c27c" />
          <g fill="none" stroke="#fff" stroke-width="6" stroke-linecap="round" stroke-linejoin="round">
            <path d="M49 52L56 43H69L79 53L87 44" />
            <path d="M33 68H49L60 56L70 67L65 86" />
            <path d="M65 45L59 56" stroke-width="11" stroke-linecap="butt" />
          </g>
          <circle cx="75" cy="36" r="5" fill="#fff" />
        </svg>
        <div>
          <h2>BĚH</h2>
          <time datetime="2020-10-29T18:32">29. října 2020 18:32</time>
        </div>
      </section>

      <h2 class="section">Přehled</h2>

      <section class="card stats">
        <div v-for="s in stats" :key="s.label" class="stat">
          <svg width="90" height="90" viewBox="0 0 270 270" fill="none" stroke-width="12" :class="s.icon">
            <template v-if="s.icon === 'pins'">
              <g stroke="#9a6cb1">
                <path d="M141 62A70 70 0 0 0 7 84C7 122 48 166 76 191L100 167" />
                <path d="M112 83A36 36 0 1 0 92 114" />
              </g>
              <g stroke="#703090">
                <path d="M184 257C156 228 108 182 108 141A76 76 0 0 1 260 141C260 182 212 228 184 257Z" />
                <circle cx="183" cy="138" r="38" />
              </g>
            </template>
            <g v-else-if="s.icon === 'watch'" stroke="#445ca8">
              <path d="M149 44A109 109 0 0 1 197 63L210 50L236 74L221 87A108 108 0 1 1 121 44V33H109V15H160V33H149Z" />
              <path d="M135 124V150" stroke-width="6" />
              <circle cx="135" cy="153" r="15" fill="#445ca8" stroke="none" />
            </g>
            <template v-else-if="s.icon.startsWith('gauge')">
              <path d="M33 208C22 190 20 170 20 152A114 114 0 0 1 248 152C248 170 246 190 235 208L209 176C213 168 214 160 214 152A80 80 0 0 0 54 152C54 160 55 168 60 176Z" />
              <g class="fill" stroke="none">
                <circle cx="134" cy="93" r="8" /><circle cx="92" cy="110" r="8" /><circle cx="176" cy="110" r="8" />
                <circle cx="74" cy="152" r="8" /><circle cx="194" cy="152" r="8" /><circle cx="134" cy="156" r="15" />
              </g>
              <path v-if="s.icon.endsWith('avg')" d="M134 122V156" stroke-width="16" />
              <path v-else d="M134 156L160 182" stroke-width="12" />
            </template>
            <g v-else-if="s.icon === 'flame'" stroke="#eb9f3e" stroke-linejoin="round">
              <path d="M135 8C165 22 202 70 209 110Q216 116 220 108L222 84C236 110 240 130 240 152A103 103 0 0 1 33 152C33 124 38 100 57 78C45 102 50 125 60 125C78 125 60 80 102 34C86 70 92 99 118 98C158 97 178 50 135 8Z" />
              <path d="M138 139C110 150 100 170 100 188A40 40 0 0 0 179 188C179 168 172 152 152 146Q166 160 161 173Q134 178 138 139Z" />
            </g>
            <template v-else-if="s.icon === 'drops'">
              <path stroke="#83adf7" d="M139 92C120 60 98 38 79 15C45 50 7 90 7 128A74 70 0 0 0 96 196" />
              <path stroke="#4f87f0" d="M186 62C150 100 110 140 110 180A76 76 0 0 0 262 180C262 140 222 100 186 62Z" />
            </template>
            <g v-else stroke="#c44536" stroke-width="17">
              <path d="M135 66C108 20 20 26 18 100C18 170 90 220 135 250C180 220 252 170 252 100C250 26 162 20 135 66Z" />
              <path v-if="s.icon === 'heart'" d="M20 140H58L75 92L100 190" stroke-width="14" />
              <path v-else d="M40 150L78 112L110 170" stroke-width="14" />
            </g>
          </svg>
          <div>
            <h3>{{ s.label }}</h3>
            <p v-if="s.value"><b>{{ s.value }}</b><span v-if="s.unit">{{ s.unit }}</span></p>
          </div>
        </div>
      </section>
    </main>
  </div>
</template>

<style>
body {
  margin: 0;
  background: #eff0f3;
}
</style>

<style scoped>
.app {
  height: 100vh;
  overflow: hidden;
  background: #eff0f3;
  color: #222529;
  font-family: Inter, Roboto, "Liberation Sans", sans-serif;
}
h1, h2, h3, p {
  margin: 0;
}
svg {
  flex: none;
}
.top {
  background: linear-gradient(#7ccb41, #67b63e 40%, #459841);
  border-bottom: 1px solid #a5a1a9;
  color: #fff;
  padding-bottom: 5px;
}
.status {
  display: flex;
  align-items: center;
  height: 62px;
  padding: 0 15px 0 20px;
  gap: 12px;
  font-size: 35px;
}
.carrier {
  margin-right: 4px;
}
.grow {
  flex: 1;
}
.nav {
  display: flex;
  align-items: center;
  justify-content: space-between;
  height: 124px;
  padding: 0 60px 0 37px;
}
.nav h1 {
  font-size: 58px;
  font-weight: 600;
}
.icon-btn {
  display: flex;
  width: 72px;
  padding: 0;
  border: 0;
  background: none;
}
.more {
  margin-left: -23px;
}
main {
  padding: 30px;
}
.banner {
  position: relative;
  display: flex;
  align-items: center;
  max-width: 960px;
  height: 150px;
  margin: 0 auto 60px;
  padding: 0 30px;
  box-sizing: border-box;
  overflow: hidden;
  background: linear-gradient(#4b5a99, #50489a 60%, #573f97);
  color: #fff;
}
.photo {
  position: absolute;
  inset: 0;
  width: 100%;
  height: 100%;
}
.badge, .banner strong, .premium {
  position: relative;
}
.banner strong {
  flex: 1;
  margin-left: 30px;
  font-size: 39px;
  font-weight: 700;
}
.premium {
  width: 276px;
  height: 90px;
  padding: 0;
  border: 0;
  border-radius: 5px;
  background: #82bf3b;
  color: #fff;
  font: 500 41px "Roboto Condensed", "Liberation Sans Narrow", Roboto, sans-serif;
}
.map, .card {
  background: #fff;
  box-shadow: 0 1px 6px rgba(0, 0, 0, 0.12);
}
.map {
  position: relative;
  margin-bottom: 30px;
}
.map svg {
  display: block;
  width: 100%;
}
.map small {
  position: absolute;
  right: 0;
  bottom: 0;
  padding: 0 1px 0 2px;
  background: rgba(255, 255, 255, 0.8);
  color: #444;
  font-size: 25px;
  line-height: 28px;
}
.town { fill: #f6f5e2; }
.industry { fill: #f0f0e0; }
.yard { fill: #f5f4e0; }
.meadow { fill: #e7f0c7; }
.forest { fill: #c8d8b1; }
.garden { fill: #def0c9; }
.school { fill: #fdf0d0; }
.pitch { fill: #c1e4bd; }
.cemetery { fill: #d8ddd1; }
.water { fill: #c8ddf2; }
.land { fill: #fcfbe8; }
.line {
  fill: none;
  stroke-linecap: round;
  stroke-linejoin: round;
}
.names {
  fill: #717171;
  stroke: #fbfaf0;
  stroke-width: 7px;
  stroke-linejoin: round;
  paint-order: stroke;
  font-family: "Noto Sans", "Open Sans", sans-serif;
  text-anchor: middle;
}
.places {
  fill: #868686;
}
.river {
  fill: #8aa6c4;
  stroke: none;
}
.activity {
  display: flex;
  gap: 30px;
  padding: 30px;
}
.activity h2 {
  margin-top: 4px;
  font: 700 40px/44px Roboto, sans-serif;
}
.activity time {
  display: block;
  margin-top: 4px;
  font-size: 40px;
  line-height: 56px;
}
.section {
  margin: 51px 30px 32px;
  font-size: 40px;
  font-weight: 600;
  line-height: 52px;
}
.stats {
  display: grid;
  grid-template-columns: 1fr 1fr;
  padding: 30px 0 30px 30px;
}
.stat {
  display: flex;
  gap: 30px;
  height: 150px;
  padding-top: 30px;
  box-sizing: border-box;
}
.stat h3 {
  color: #9398a3;
  font-size: 32px;
  font-weight: 500;
  line-height: 34px;
}
.stat p {
  display: flex;
  align-items: baseline;
  gap: 20px;
  color: #000;
  font-size: 40px;
  line-height: 88px;
}
.stat b {
  font-family: "Roboto Condensed", Roboto, sans-serif;
  font-size: 60px;
  font-weight: 600;
}
.green { stroke: #459e62; }
.green .fill { fill: #459e62; }
.red { stroke: #c74639; }
.red .fill { fill: #c74639; }
</style>
